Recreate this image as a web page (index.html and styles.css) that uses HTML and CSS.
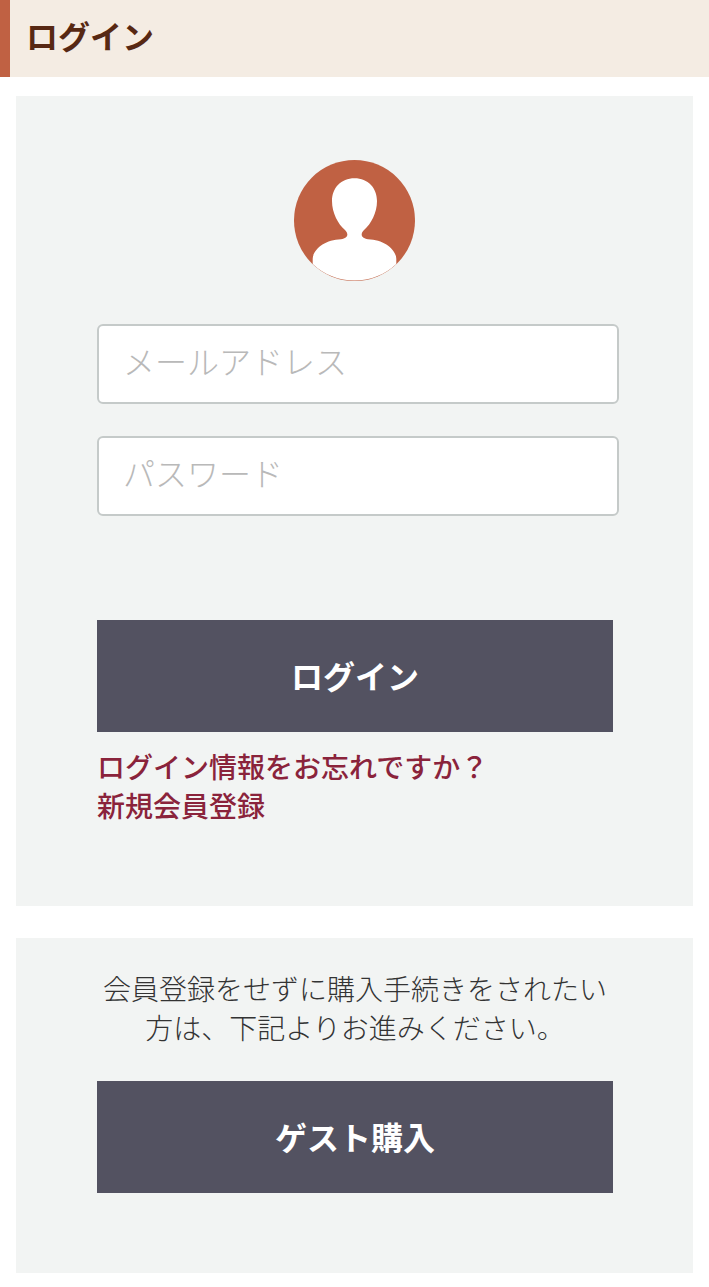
FILE: index.html
```html
<!DOCTYPE html>
<html lang="ja">
<head>
    <meta charset="UTF-8">
    <title>ログイン</title>
    <link rel="stylesheet" href="styles.css">
</head>
<body>
    <h1 class="page-title">ログイン</h1>
    <form class="box login">
        <svg class="icon" viewBox="0 0 121 121" width="121" height="121">
            <circle cx="60.500" cy="60.500" r="60.500" fill="#c06143"/>
            <path fill="#fff" d="M60.500 18.300C74 18.300 83 28 83 41C83 53 77 64 70 70C66 74 67 78.500 74 79.300C90 79.500 102.500 90 102.300 99V103.900A60.600 60.600 0 0 1 18.700 103.900V99C18.500 90 31 79.500 47 79.300C54 78.500 55 74 51 70C44 64 38 53 38 41C38 28 47 18.300 60.500 18.300Z"/>
        </svg>
        <input class="field" type="email" placeholder="メールアドレス">
        <input class="field" type="password" placeholder="パスワード">
        <button class="btn" type="button">ログイン</button>
        <div class="links">
            <a href="#">ログイン情報をお忘れですか？</a>
            <a href="#">新規会員登録</a>
        </div>
    </form>
    <div class="box guest">
        <p class="message">会員登録をせずに購入手続きをされたい方は、下記よりお進みください。</p>
        <button class="btn" type="button">ゲスト購入</button>
    </div>
</body>
</html>
```

FILE: styles.css
```css
* {
    box-sizing: border-box;
}
body {
    margin: 0;
    background: #fff;
    color: #333;
    font-family: "Noto Sans CJK JP", sans-serif;
}
.page-title {
    margin: 0 0 19px;
    height: 77px;
    padding-left: 16px;
    border-left: 10px solid #c06143;
    background: #f4ece3;
    color: #572813;
    font-size: 32px;
    font-weight: bold;
    line-height: 70px;
}
.box {
    margin: 0 16px;
    padding: 0 80px 0 81px;
    background: #f2f4f3;
}
.login {
    height: 810px;
    padding-top: 64px;
}
.icon {
    display: block;
    margin: 0 0 43px 197px;
}
.field {
    display: block;
    width: 522px;
    height: 80px;
    margin-bottom: 32px;
    padding: 0 24px 8px;
    border: 2px solid #c5cac9;
    border-radius: 6px;
    background: #fff;
    font-family: inherit;
    font-size: 32px;
    font-weight: 300;
}
.field::placeholder {
    color: #b9b9b9;
}
.btn {
    display: block;
    width: 516px;
    height: 112px;
    padding: 0 0 2px;
    border: 0;
    background: #535261;
    color: #fff;
    font-family: inherit;
    font-size: 32px;
    font-weight: bold;
}
.login .btn {
    margin-top: 104px;
}
.links {
    padding-top: 15px;
}
.links a {
    display: block;
    color: #8a233b;
    font-size: 28px;
    font-weight: 500;
    line-height: 39px;
    text-decoration: none;
}
.guest {
    height: 335px;
    margin-top: 32px;
    padding-top: 31px;
}
.message {
    margin: 0 0 34px;
    font-size: 28px;
    font-weight: 300;
    line-height: 39px;
    text-align: center;
}
```
